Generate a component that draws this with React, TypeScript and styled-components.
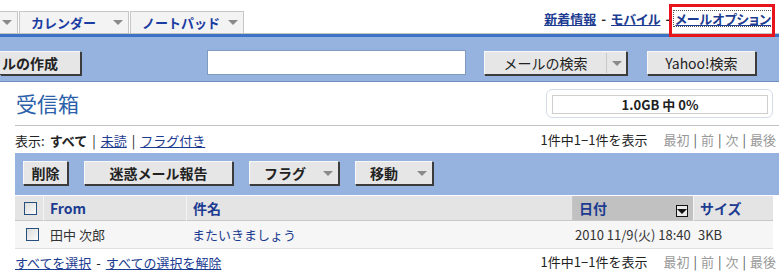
import React from "react";
import styled, { createGlobalStyle } from "styled-components";

const linkBlue = "#1c3c91";
const bandBlue = "#96b2de";

const GlobalStyle = createGlobalStyle`
  html, body {
    margin: 0;
    padding: 0;
    background: #fff;
    overflow: hidden;
  }
  body {
    font-family: "Noto Sans CJK JP", "Liberation Sans", sans-serif;
    font-size: 13px;
    color: #222;
  }
`;

const Page = styled.div`
  width: 779px;
  height: 278px;
  overflow: hidden;
`;

const TopBar = styled.div`
  height: 33px;
  border-bottom: 1px solid #c4c4c4;
  display: flex;
  justify-content: space-between;
  align-items: flex-end;
  position: relative;
`;

const Tabs = styled.div`
  display: flex;
  gap: 1px;
`;

const Tab = styled.div<{ $width: number; $cut?: boolean }>`
  width: ${(p) => p.$width}px;
  height: 22px;
  box-sizing: border-box;
  border: 1px solid #c6c6c6;
  border-bottom: none;
  border-left-width: ${(p) => (p.$cut ? 0 : 1)}px;
  background: #f3f3f3;
  display: flex;
  align-items: center;
  justify-content: ${(p) => (p.$cut ? "flex-end" : "space-between")};
  padding: 0 5px 0 ${(p) => (p.$cut ? 0 : 11)}px;
  color: #1b3ca2;
  font-weight: bold;
  font-size: 13px;
  line-height: 1;
`;

const Arrow = styled.span<{ $color?: string }>`
  width: 0;
  height: 0;
  border-left: 5px solid transparent;
  border-right: 5px solid transparent;
  border-top: 5px solid ${(p) => p.$color || "#8a8a8a"};
  display: inline-block;
`;

const TopLinks = styled.div`
  display: flex;
  gap: 5px;
  align-self: center;
  margin-top: 4px;
  padding-right: 8px;
  font-weight: bold;
  font-size: 13px;
  line-height: 1;
  color: #222;
  font-feature-settings: "palt";
`;

const Link = styled.a<{ $focus?: boolean }>`
  color: ${linkBlue};
  text-decoration: underline;
  cursor: pointer;
  outline: ${(p) => (p.$focus ? "1px dotted #555" : "none")};
  outline-offset: 1px;
`;

const Highlight = styled.div`
  position: absolute;
  left: 669px;
  top: 4px;
  width: 106px;
  height: 33px;
  box-sizing: border-box;
  border: 3px solid #e8141c;
  z-index: 2;
  pointer-events: none;
`;

const SearchBand = styled.div`
  border-top: 3px solid #3b72c4;
  border-bottom: 1px solid #6f8fc2;
  background: ${bandBlue};
  height: 48px;
  box-sizing: border-box;
  display: flex;
  align-items: flex-start;
  padding-top: 14px;
`;

const Button = styled.button<{ $bold?: boolean; $width: number }>`
  width: ${(p) => p.$width}px;
  height: 24px;
  box-sizing: border-box;
  background: #e6e6e6;
  border: 1px solid;
  border-color: #f8f8f8 #3c3c3c #3c3c3c #f8f8f8;
  box-shadow: 1px 1px 0 #3c3c3c;
  font-family: inherit;
  font-size: 14px;
  font-weight: ${(p) => (p.$bold ? "bold" : "normal")};
  color: #222;
  line-height: 1;
  padding: 0 8px;
  display: flex;
  align-items: center;
  justify-content: center;
  white-space: nowrap;
  flex-shrink: 0;
`;

const MenuButton = styled(Button)`
  justify-content: space-between;
  padding: 0 5px 0 14px;
`;

const ComposeButton = styled(Button)`
  border-left: none;
  justify-content: flex-start;
  padding-left: 2px;
  margin-right: 126px;
`;

const SearchInput = styled.input`
  width: 259px;
  height: 25px;
  box-sizing: border-box;
  border: 1px solid #7f9cc0;
  background: #fff;
  margin: -1px 18px 0 0;
  flex-shrink: 0;
`;

const SplitButton = styled(Button)`
  padding: 0;
  margin-right: 20px;
  justify-content: flex-start;
`;

const SplitLabel = styled.span`
  width: 121px;
  text-align: center;
  border-right: 1px solid #c8c8c8;
  height: 20px;
  line-height: 20px;
`;

const SplitArrow = styled.span`
  flex: 1;
  display: flex;
  justify-content: center;
`;

const Main = styled.div`
  margin-left: 15px;
`;

const TitleRow = styled.div`
  height: 44px;
  box-sizing: border-box;
  border-bottom: 1px solid #c2c2c2;
  display: flex;
  justify-content: space-between;
  align-items: flex-start;
`;

const Title = styled.h1`
  margin: 8px 0 0 1px;
  font-size: 21px;
  font-weight: normal;
  line-height: 26px;
  color: #2c5fa9;
`;

const StorageOuter = styled.div`
  width: 227px;
  height: 29px;
  margin: 7px 6px 0 0;
  box-sizing: border-box;
  border: 1px solid #d4dcea;
  border-radius: 6px;
  padding: 5px 4px 0 5px;
`;

const StorageInner = styled.div`
  height: 19px;
  box-sizing: border-box;
  border: 1px solid #cfcfcf;
  font-size: 13px;
  font-weight: bold;
  line-height: 17px;
  text-align: center;
  color: #222;
`;

const InfoRow = styled.div<{ $height: number }>`
  height: ${(p) => p.$height}px;
  display: flex;
  justify-content: space-between;
  align-items: center;
  font-size: 13px;
  line-height: 1;
  white-space: nowrap;
`;

const Filters = styled.div`
  display: flex;
  gap: 5px;
  margin-top: 2px;
`;

const Sep = styled.span<{ $muted?: boolean }>`
  color: ${(p) => (p.$muted ? "#555" : "#222")};
`;

const Pager = styled.div`
  display: flex;
  align-items: center;
  gap: 4px;
  padding-right: 3px;
`;

const PagerCount = styled.span`
  margin-right: 12px;
  color: #222;
`;

const PagerItem = styled.span`
  color: #999;
`;

const Toolbar = styled.div`
  height: 42px;
  background: ${bandBlue};
  display: flex;
  align-items: flex-start;
  padding: 8px 0 0 8px;
  box-sizing: border-box;
  gap: 16px;
`;

const Table = styled.div`
  margin-top: 1px;
  width: 758px;
  display: grid;
  grid-template-columns: 28px 143px 386px 121px 80px;
`;

const HeadCell = styled.div<{ $active?: boolean }>`
  height: 25px;
  box-sizing: border-box;
  background: ${(p) => (p.$active ? "#c1c1c1" : "#e4e4e4")};
  border-bottom: 1px solid #c8c8c8;
  border-left: 1px solid ${(p) => (p.$active ? "#c8c8c8" : "#f4f4f4")};
  color: ${linkBlue};
  font-weight: bold;
  font-size: 14px;
  display: flex;
  align-items: center;
  justify-content: space-between;
  padding: 0 5px 0 6px;
  &:first-child {
    border-left: none;
    justify-content: center;
    padding: 0 0 0 2px;
  }
`;

const Cell = styled.div<{ $blue?: boolean; $pad?: number }>`
  height: 28px;
  box-sizing: border-box;
  background: #f6f6f6;
  border-bottom: 1px solid #e0e0e0;
  display: flex;
  align-items: center;
  padding-left: ${(p) => p.$pad ?? 7}px;
  font-size: 13px;
  color: ${(p) => (p.$blue ? linkBlue : "#333")};
  white-space: nowrap;
  overflow: hidden;
`;

const Check = styled.span`
  width: 13px;
  height: 13px;
  box-sizing: border-box;
  border: 1px solid #28507e;
  background: linear-gradient(135deg, #dcdcdc, #fbfbfb);
  display: inline-block;
`;

const SortIcon = styled.span`
  width: 12px;
  height: 12px;
  box-sizing: border-box;
  border: 1px solid #111;
  background: #e8e8e8;
  display: flex;
  align-items: center;
  justify-content: center;
  margin-top: 6px;
`;

const App = () => (
  <Page>
    <GlobalStyle />
    <TopBar>
      <Tabs>
        <Tab $width={18} $cut>
          <Arrow />
        </Tab>
        <Tab $width={110}>
          カレンダー
          <Arrow />
        </Tab>
        <Tab $width={114}>
          ノートパッド
          <Arrow />
        </Tab>
      </Tabs>
      <TopLinks>
        <Link>新着情報</Link>
        <span>-</span>
        <Link>モバイル</Link>
        <span>-</span>
        <Link $focus>メールオプション</Link>
      </TopLinks>
      <Highlight />
    </TopBar>

    <SearchBand>
      <ComposeButton $bold $width={81}>
        ルの作成
      </ComposeButton>
      <SearchInput type="text" />
      <SplitButton $width={143}>
        <SplitLabel>メールの検索</SplitLabel>
        <SplitArrow>
          <Arrow />
        </SplitArrow>
      </SplitButton>
      <Button $width={109}>Yahoo!検索</Button>
    </SearchBand>

    <Main>
      <TitleRow>
        <Title>受信箱</Title>
        <StorageOuter>
          <StorageInner>1.0GB 中 0%</StorageInner>
        </StorageOuter>
      </TitleRow>

      <InfoRow $height={27}>
        <Filters>
          <span>表示:</span>
          <b>すべて</b>
          <Sep>|</Sep>
          <Link>未読</Link>
          <Sep>|</Sep>
          <Link>フラグ付き</Link>
        </Filters>
        <Pager>
          <PagerCount>1件中1−1件を表示</PagerCount>
          <PagerItem>最初</PagerItem>
          <Sep $muted>|</Sep>
          <PagerItem>前</PagerItem>
          <Sep $muted>|</Sep>
          <PagerItem>次</PagerItem>
          <Sep $muted>|</Sep>
          <PagerItem>最後</PagerItem>
        </Pager>
      </InfoRow>

      <Toolbar>
        <Button $bold $width={45}>
          削除
        </Button>
        <Button $bold $width={149}>
          迷惑メール報告
        </Button>
        <MenuButton $bold $width={90}>
          フラグ
          <Arrow />
        </MenuButton>
        <MenuButton $bold $width={78}>
          移動
          <Arrow />
        </MenuButton>
      </Toolbar>

      <Table>
        <HeadCell>
          <Check />
        </HeadCell>
        <HeadCell>From</HeadCell>
        <HeadCell>件名</HeadCell>
        <HeadCell $active>
          日付
          <SortIcon>
            <Arrow $color="#111" />
          </SortIcon>
        </HeadCell>
        <HeadCell>サイズ</HeadCell>

        <Cell $pad={11}>
          <Check />
        </Cell>
        <Cell>田中 次郎</Cell>
        <Cell $blue $pad={6}>
          またいきましょう
        </Cell>
        <Cell $pad={3}>2010 11/9(火) 18:40</Cell>
        <Cell $pad={5}>3KB</Cell>
      </Table>

      <InfoRow $height={24}>
        <Filters>
          <Link>すべてを選択</Link>
          <span>-</span>
          <Link>すべての選択を解除</Link>
        </Filters>
        <Pager>
          <PagerCount>1件中1−1件を表示</PagerCount>
          <PagerItem>最初</PagerItem>
          <Sep $muted>|</Sep>
          <PagerItem>前</PagerItem>
          <Sep $muted>|</Sep>
          <PagerItem>次</PagerItem>
          <Sep $muted>|</Sep>
          <PagerItem>最後</PagerItem>
        </Pager>
      </InfoRow>
    </Main>
  </Page>
);

export default App;
